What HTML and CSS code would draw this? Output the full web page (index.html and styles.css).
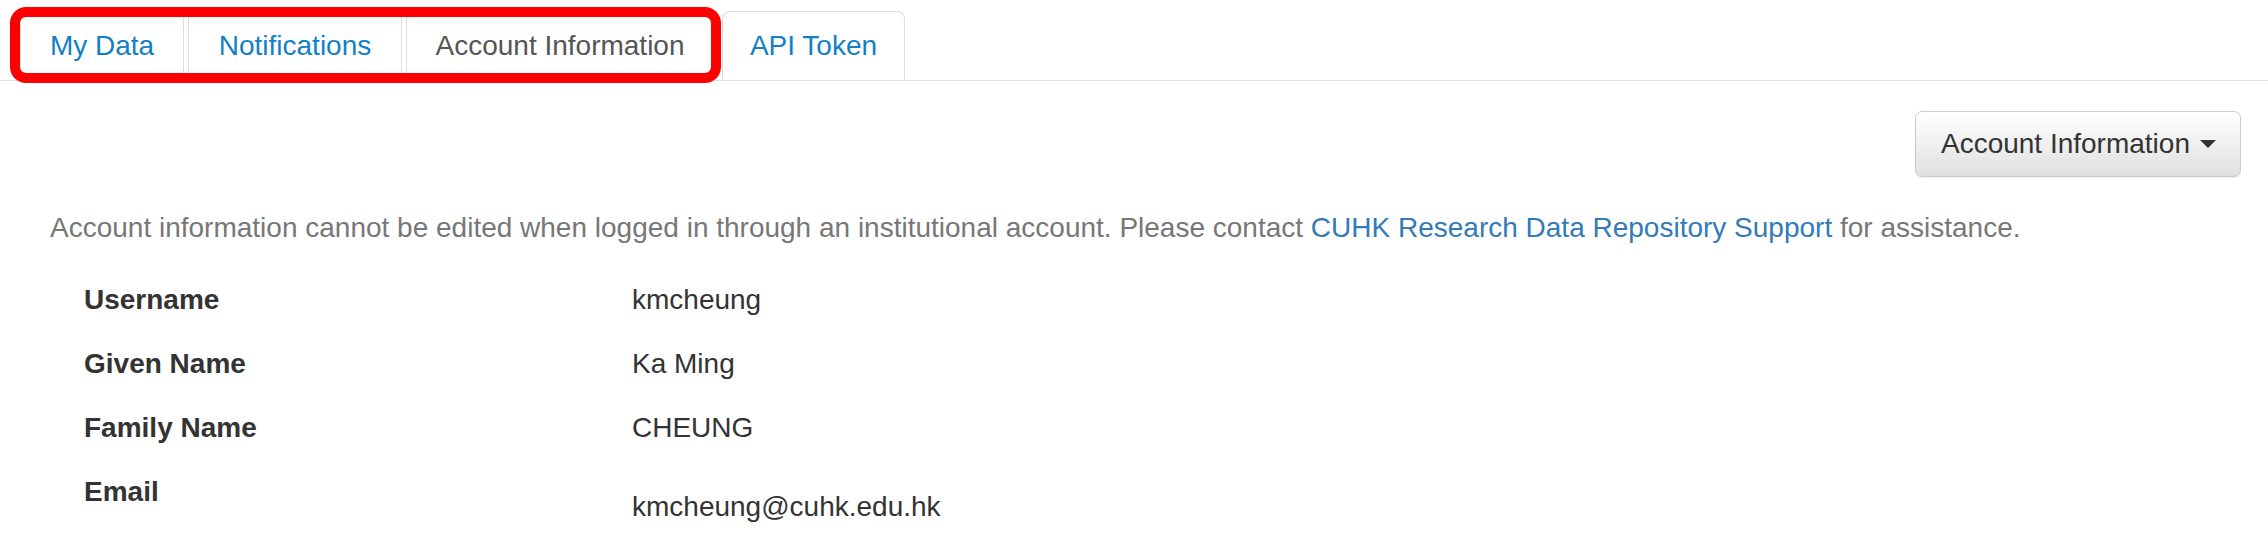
FILE: index.html
```html
<!DOCTYPE html>
<html lang="en">
<head>
<meta charset="utf-8">
<title>Account Information</title>
<link rel="stylesheet" href="styles.css">
</head>
<body>
<div class="page">
  <nav class="tabs-wrap">
    <ul class="tabs">
      <li class="tab tab-data"><a href="#">My Data</a></li>
      <li class="tab tab-notif"><a href="#">Notifications</a></li>
      <li class="tab tab-account tab-current"><a href="#">Account Information</a></li>
      <li class="tab tab-api"><a href="#">API Token</a></li>
    </ul>
    <div class="highlight"></div>
  </nav>

  <div class="toolbar">
    <button class="btn" type="button">Account Information <span class="caret"></span></button>
  </div>

  <p class="notice">Account information cannot be edited when logged in through an institutional account. Please contact <a href="#">CUHK Research Data Repository Support</a> for assistance.</p>

  <div class="info">
    <div class="row"><div class="label">Username</div><div class="value">kmcheung</div></div>
    <div class="row"><div class="label">Given Name</div><div class="value">Ka Ming</div></div>
    <div class="row"><div class="label">Family Name</div><div class="value">CHEUNG</div></div>
    <div class="row"><div class="label">Email</div><div class="value value-offset">kmcheung@cuhk.edu.hk</div></div>
  </div>
</div>
</body>
</html>
```

FILE: styles.css
```css
html, body {
  margin: 0;
  padding: 0;
  background: #fff;
}

body {
  font-family: "Liberation Sans", Arial, Helvetica, sans-serif;
  font-size: 28px;
  line-height: 40px;
  color: #333;
}

.page {
  width: 2268px;
  height: 540px;
  overflow: hidden;
}

.tabs-wrap {
  position: relative;
  padding-top: 11px;
}

.tabs {
  display: flex;
  list-style: none;
  margin: 0;
  padding: 0 0 0 20px;
  border-bottom: 1px solid #ddd;
}

.tab {
  margin-right: 4px;
}

.tab a {
  display: block;
  box-sizing: border-box;
  padding: 19px 0;
  line-height: 30px;
  text-align: center;
  color: #1380c6;
  text-decoration: none;
  border: 1px solid #ddd;
  border-bottom: none;
  border-radius: 8px 8px 0 0;
}

.tab-data a { width: 164px; }
.tab-notif a { width: 214px; }
.tab-account { margin-right: 8px; }
.tab-account a { width: 308px; }
.tab-api a { width: 183px; }

.tab-current a {
  color: #555;
}

.highlight {
  position: absolute;
  left: 10px;
  top: 7px;
  width: 711px;
  height: 76px;
  box-sizing: border-box;
  border: 10px solid #ff0000;
  border-radius: 16px;
  pointer-events: none;
}

.toolbar {
  display: flex;
  justify-content: flex-end;
  padding: 30px 27px 0 0;
}

.btn {
  display: flex;
  align-items: center;
  gap: 10px;
  height: 66px;
  padding: 0 24px 0 25px;
  font-family: inherit;
  font-size: 28px;
  color: #333;
  background: linear-gradient(to bottom, #ffffff 0%, #e0e0e0 100%);
  border: 1px solid #ccc;
  border-radius: 7px;
  box-shadow: inset 0 1px 0 rgba(255,255,255,0.15), 0 1px 1px rgba(0,0,0,0.075);
}

.caret {
  display: inline-block;
  width: 0;
  height: 0;
  border-top: 8px solid #333;
  border-left: 8px solid transparent;
  border-right: 8px solid transparent;
}

.notice {
  margin: 31px 0 0 0;
  padding-left: 50px;
  color: #777;
}

.notice a {
  color: #337ab7;
  text-decoration: none;
}

.info {
  margin-top: 32px;
  padding-left: 84px;
}

.row {
  display: grid;
  grid-template-columns: 548px 1fr;
  margin-bottom: 24px;
}

.label {
  font-weight: bold;
}

.value-offset {
  padding-top: 15px;
}
```
